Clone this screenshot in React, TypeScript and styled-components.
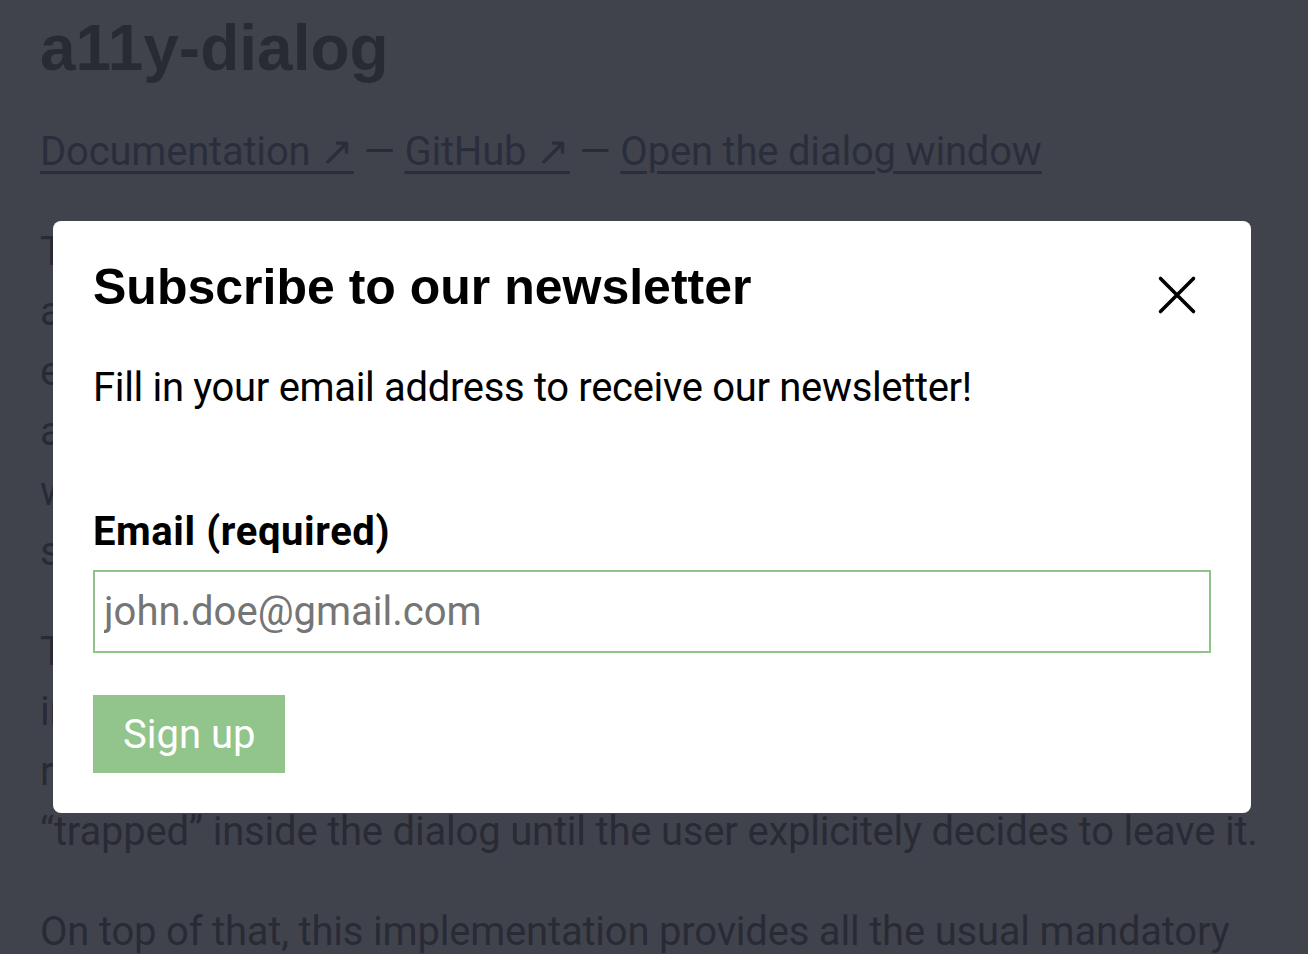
import React from "react";
import styled, { createGlobalStyle } from "styled-components";

const Global = createGlobalStyle`
  html, body { margin: 0; padding: 0; background: #fff; }
  body { font-family: Roboto, "Noto Sans", sans-serif; color: #111; overflow: hidden; }
  * { box-sizing: border-box; }
`;

const Page = styled.main`
  padding: 10px 40px 0 40px;
  height: 954px;
  overflow: hidden;
`;

const Title = styled.h1`
  font-family: "Liberation Sans", Arial, sans-serif;
  font-weight: 700;
  font-size: 64px;
  line-height: 76px;
  margin: 0 0 36px;
  color: #111;
`;

const Nav = styled.p`
  font-size: 40px;
  line-height: 60px;
  letter-spacing: -0.2px;
  margin: 0 0 40px;
  color: #111;
`;

const NavLink = styled.a`
  color: #1f3b5c;
  text-decoration: underline;
  text-decoration-thickness: 3px;
  text-underline-offset: 6px;
`;

const Para = styled.p`
  font-size: 40px;
  line-height: 60px;
  letter-spacing: -0.2px;
  margin: 0 0 40px;
  white-space: nowrap;
`;

const Line = styled.span`
  display: block;
`;

const Overlay = styled.div`
  position: fixed;
  inset: 0;
  background: rgba(43, 46, 56, 0.9);
  display: flex;
  align-items: flex-start;
  justify-content: flex-start;
  padding: 221px 0 0 53px;
`;

const Dialog = styled.div`
  width: 1198px;
  background: #fff;
  border-radius: 8px;
  padding: 40px;
`;

const Header = styled.div`
  display: flex;
  justify-content: space-between;
  align-items: flex-start;
`;

const DialogTitle = styled.h2`
  font-family: "Liberation Sans", Arial, sans-serif;
  font-weight: 700;
  font-size: 50px;
  line-height: 52px;
  margin: 0;
  color: #000;
`;

const CloseButton = styled.button`
  width: 44px;
  height: 44px;
  margin: 12px 12px 0 0;
  padding: 0;
  border: 0;
  background: transparent;
  display: flex;
  align-items: center;
  justify-content: center;
  cursor: pointer;
`;

const Intro = styled.p`
  font-size: 40px;
  line-height: 60px;
  letter-spacing: -0.33px;
  margin: 41px 0 0;
  color: #000;
`;

const Form = styled.form`
  display: flex;
  flex-direction: column;
  align-items: flex-start;
  margin-top: 84px;
`;

const Label = styled.label`
  font-size: 40px;
  line-height: 60px;
  font-weight: 700;
  letter-spacing: 0.6px;
  color: #000;
`;

const Input = styled.input`
  margin-top: 8px;
  width: 100%;
  height: 83px;
  border: 2px solid #8fc488;
  padding: 0 9px;
  font-family: Roboto, "Noto Sans", sans-serif;
  font-size: 40px;
  color: #000;
  outline: none;
  &::placeholder { color: #757575; }
`;

const Submit = styled.button`
  margin-top: 42px;
  height: 78px;
  padding: 0 30px;
  border: 0;
  background: #91c58b;
  color: #fff;
  font-family: Roboto, "Noto Sans", sans-serif;
  font-size: 40px;
  cursor: pointer;
`;

export default function App() {
  return (
    <>
      <Global />
      <Page>
        <Title>a11y-dialog</Title>
        <Nav>
          <NavLink href="#">Documentation ↗</NavLink> — <NavLink href="#">GitHub ↗</NavLink> —{" "}
          <NavLink href="#">Open the dialog window</NavLink>
        </Nav>
        <Para>
          <Line>The dialog window which is about to open is an example of</Line>
          <Line>a lightweight and accessible dialog made with a11y-dialog.</Line>
          <Line>exposes the right ARIA attributes, manages the focus and</Line>
          <Line>allows the user to close it with the escape key. It can be</Line>
          <Line>with or without JavaScript frameworks, and suits all</Line>
          <Line>sorts of content, from simple alerts to complex forms.</Line>
        </Para>
        <Para>
          <Line>The focus is moved to the dialog when it opens, and</Line>
          <Line>in the page when it closes. While open, the focus is</Line>
          <Line>restricted to the dialog content, which means it remains</Line>
          <Line>“trapped” inside the dialog until the user explicitely decides to leave it.</Line>
        </Para>
        <Para>
          <Line>On top of that, this implementation provides all the usual mandatory</Line>
          <Line>features of an accessible dialog window.</Line>
        </Para>
      </Page>
      <Overlay>
        <Dialog role="dialog" aria-modal="true" aria-labelledby="dialog-title">
          <Header>
            <DialogTitle id="dialog-title">Subscribe to our newsletter</DialogTitle>
            <CloseButton type="button" aria-label="Close dialog">
              <svg width="44" height="44" viewBox="0 0 44 44" aria-hidden="true">
                <path
                  d="M5.5 5.5 L38.5 38.5 M38.5 5.5 L5.5 38.5"
                  stroke="#000"
                  strokeWidth="3.6"
                  strokeLinecap="round"
                  fill="none"
                />
              </svg>
            </CloseButton>
          </Header>
          <Intro>Fill in your email address to receive our newsletter!</Intro>
          <Form onSubmit={(e) => e.preventDefault()}>
            <Label htmlFor="email">Email (required)</Label>
            <Input id="email" type="email" placeholder="john.doe@gmail.com" />
            <Submit type="submit">Sign up</Submit>
          </Form>
        </Dialog>
      </Overlay>
    </>
  );
}
